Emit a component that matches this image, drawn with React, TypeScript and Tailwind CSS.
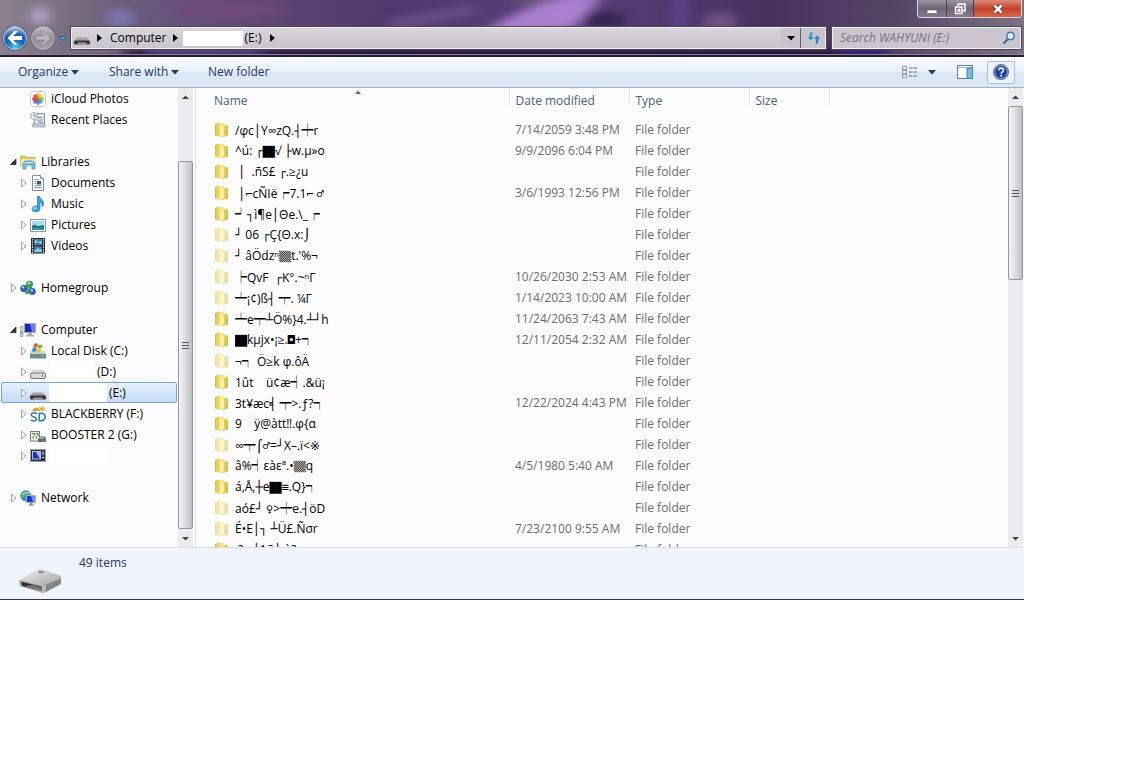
import React from "react";

type IconProps = { className?: string };

const Glass = () => (
  <svg className="absolute inset-0 -z-10 h-full w-full" viewBox="0 0 1024 57" preserveAspectRatio="none" aria-hidden="true">
    <defs>
      <linearGradient id="glass" x1="0" x2="1" y1="0" y2="0">
        <stop offset="0" stopColor="#89808f" />
        <stop offset="0.08" stopColor="#746a7e" />
        <stop offset="0.13" stopColor="#6a5a7c" />
        <stop offset="0.3" stopColor="#5a4170" />
        <stop offset="0.38" stopColor="#4f386b" />
        <stop offset="0.55" stopColor="#59407c" />
        <stop offset="0.75" stopColor="#47315c" />
        <stop offset="0.88" stopColor="#594668" />
        <stop offset="1" stopColor="#7c7186" />
      </linearGradient>
      <filter id="soft" filterUnits="userSpaceOnUse" x="-40" y="-40" width="1104" height="140"><feGaussianBlur stdDeviation="6 4" /></filter>
    </defs>
    <rect width="1024" height="57" fill="url(#glass)" />
    <g filter="url(#soft)">
      <path d="M485 30L520 12 565 -5 605 -5 570 30 490 34Z" fill="#aa80cf" />
      <ellipse cx="40" cy="16" rx="11" ry="9" fill="#b39cc4" />
      <ellipse cx="120" cy="18" rx="15" ry="9" fill="#7a74b0" />
      <ellipse cx="230" cy="10" rx="60" ry="7" fill="#704a79" />
      <path d="M380 22L470 6 480 12 400 28Z" fill="#70538c" />
      <ellipse cx="530" cy="-2" rx="20" ry="7" fill="#65546c" />
      <ellipse cx="605" cy="20" rx="22" ry="8" fill="#35214f" />
      <ellipse cx="680" cy="12" rx="8" ry="20" fill="#5f4590" />
      <ellipse cx="720" cy="22" rx="18" ry="10" fill="#705283" />
      <ellipse cx="880" cy="12" rx="24" ry="12" fill="#534363" />
      <rect x="125" y="50" width="760" height="12" fill="#1e0f34" />
      <ellipse cx="205" cy="53" rx="60" ry="5" fill="#48407f" />
      <ellipse cx="865" cy="53" rx="28" ry="6" fill="#2c2870" />
    </g>
    <rect y="54" width="1024" height="1" fill="#8b8195" />
    <rect y="55" width="1024" height="2" fill="#2a1839" />
  </svg>
);

const BackIcon = () => (
  <svg viewBox="0 0 26 26" className="size-[26px]" aria-hidden="true">
    <defs>
      <radialGradient id="back" cx="0.5" cy="0.95" r="0.9">
        <stop offset="0" stopColor="#4fd2f8" />
        <stop offset="0.45" stopColor="#1b63b8" />
        <stop offset="0.7" stopColor="#2a5ca8" />
        <stop offset="1" stopColor="#a9c6e6" />
      </radialGradient>
    </defs>
    <circle cx="13" cy="13" r="12.500" fill="#33395c" />
    <circle cx="13" cy="13" r="11.500" fill="url(#back)" stroke="#c5d4e8" />
    <path d="M12.500 6L5.500 13l7 7h3.500l-5-5H20v-4h-9l5-5z" fill="#fff" />
  </svg>
);

const ForwardIcon = () => (
  <svg viewBox="0 0 26 26" className="size-[26px]" aria-hidden="true">
    <defs>
      <linearGradient id="fwd" x1="0" x2="0" y1="0" y2="1">
        <stop offset="0" stopColor="#c5c1c9" />
        <stop offset="0.5" stopColor="#918b96" />
        <stop offset="1" stopColor="#aaa4b0" />
      </linearGradient>
    </defs>
    <circle cx="13" cy="13" r="12.500" fill="#62596c" />
    <circle cx="13" cy="13" r="11.500" fill="url(#fwd)" stroke="#b5afba" />
    <path d="M13.500 6l7 7-7 7H10l5-5H6v-4h9l-5-5z" fill="#bdb9c1" stroke="#88838e" strokeWidth="0.700" />
  </svg>
);

const Caret = ({ className = "" }: IconProps) => (
  <svg viewBox="0 0 8 5" className={`h-[5px] w-2 shrink-0 ${className}`} aria-hidden="true"><path d="M0 0h8L4 4.500z" fill="currentColor" /></svg>
);

const Crumb = () => (
  <svg viewBox="0 0 5 8" className="h-2 w-[5px] shrink-0" aria-hidden="true"><path d="M0 0l5 4-5 4z" fill="#000" /></svg>
);

const icon = "size-4 shrink-0";

const DarkDrive = () => (
  <svg viewBox="0 0 16 16" className={icon} aria-hidden="true">
    <path d="M3 7.500h10l3 3.500H0z" fill="#a5a2a8" />
    <path d="M1 10.500h14q1 0 1 1.500v1.500q0 1-1 1H1q-1 0-1-1V12q0-1.500 1-1.500z" fill="#39363b" />
    <path d="M4 12.500h8l1.500 2.500h-11z" fill="#9b989d" />
  </svg>
);

const LightDrive = () => (
  <svg viewBox="0 0 16 16" className={icon} aria-hidden="true">
    <path d="M3 6.500h10l2.500 4H.5z" fill="#e4e4e4" stroke="#aaa" strokeWidth="0.600" />
    <rect x="0.500" y="9" width="15" height="5.500" rx="1.500" fill="#d9dada" stroke="#777" />
    <path d="M12.500 10.500v2.500" stroke="#49a949" />
  </svg>
);

const PhotosIcon = () => (
  <svg viewBox="0 0 16 16" className={icon} aria-hidden="true">
    <rect x="0.500" y="0.500" width="15" height="15" rx="3" fill="#fff" stroke="#d3c6b9" />
    {["#f6a21c", "#e9d22a", "#8cc63f", "#3fae8f", "#4b87d8", "#8d5bb5", "#d83b62", "#ee4b2b"].map((c, i) => (
      <ellipse key={c} cx="8" cy="4.900" rx="1.900" ry="2.900" fill={c} fillOpacity="0.900" transform={`rotate(${i * 45} 8 8)`} />
    ))}
  </svg>
);

const RecentIcon = () => (
  <svg viewBox="0 0 16 16" className={icon} aria-hidden="true">
    <path d="M4.500 1.500h10v11h-10z" fill="#dce8f0" stroke="#8195a5" />
    <path d="M6 5.500h6M7 8h2v3M10 8h3M10 10.500h3" stroke="#7790a2" fill="none" />
    <path d="M2 12h13v3H3z" fill="#c5d2dc" stroke="#8495a3" strokeWidth="0.700" />
    <circle cx="4" cy="4" r="3.500" fill="#eef2f5" stroke="#9aa8b3" />
    <path d="M4 2v2h2" stroke="#687b8c" fill="none" />
  </svg>
);

const LibrariesIcon = () => (
  <svg viewBox="0 0 16 16" className={icon} aria-hidden="true">
    <path d="M.5 2h5l1 1.500H15v9H.5z" fill="#e6c964" stroke="#caa84a" strokeWidth="0.700" />
    <path d="M1 5h14v8H1z" fill="#f7e9a4" />
    <path d="M3 15V9.500L5 7h7.500L15 9.500V15h-3v-4H6v4z" fill="#74c0e8" stroke="#3f8ec2" strokeWidth="0.700" />
    <path d="M5 8.500h8" stroke="#c9ecfb" />
  </svg>
);

const DocumentIcon = () => (
  <svg viewBox="0 0 16 16" className={icon} aria-hidden="true">
    <path d="M2.500.5h8l3 3v12h-11z" fill="#fdfeff" stroke="#7f8fa0" />
    <path d="M10.500.5v3h3" fill="#dfe8f0" stroke="#7f8fa0" />
    <path d="M4.500 4.500h4M4.500 6.500h2M4.500 8.500h2M4.500 10.500h7M4.500 12.500h7" stroke="#8296ac" />
    <rect x="7" y="6" width="4" height="3.500" fill="#2c5f94" />
  </svg>
);

const MusicIcon = () => (
  <svg viewBox="0 0 16 16" className={icon} aria-hidden="true">
    <path d="M7.500.3h2C10 3 14 4 13.500 8.500c-.3 1-.8 1.800-1.300 2.200.3-3-1.200-4-2.200-4.500V13c0 3.500-8 3.500-8 .3 0-2.800 3.300-3.800 5.500-3z" fill="#38a6df" stroke="#1c6fae" strokeWidth="0.700" />
    <ellipse cx="4.800" cy="12.300" rx="2" ry="1.200" fill="#8ad4f5" />
  </svg>
);

const PicturesIcon = () => (
  <svg viewBox="0 0 16 16" className={icon} aria-hidden="true">
    <rect x="0.500" y="2.500" width="15" height="12" fill="#fff" stroke="#8b98a5" />
    <rect x="2" y="4" width="12" height="9" fill="#a5dcf0" />
    <path d="M2 9c3-3 5 0 7 0s3-1 5-1v5H2z" fill="#23776c" />
    <path d="M2 11c4-1 8 1 12 0v2H2z" fill="#2c98b7" />
  </svg>
);

const VideosIcon = () => (
  <svg viewBox="0 0 16 16" className={icon} aria-hidden="true">
    <path d="M1 0h14v15.500H1z" fill="#222b33" />
    <path d="M4 1h8v6H4zM4 8.500h8v6H4z" fill="#3884b6" />
    <path d="M5 2l4 2 3-1.500V6L8 4.500 5 6zM4 13l4-3 4 2v2H4z" fill="#94c7de" />
    <path d="M7 4l2 4-3 1z" fill="#8c3d31" />
    <path d="M2.500 1v14M13.500 1v14" stroke="#e7eef2" strokeDasharray="1.500 1" />
  </svg>
);

const HomegroupIcon = () => (
  <svg viewBox="0 0 16 16" className={icon} aria-hidden="true">
    <path d="M4 8l6-4 2 8-8-4" stroke="#4f8f98" strokeWidth="2.500" fill="#7db8c2" />
    <circle cx="3.800" cy="8.500" r="3.600" fill="#2f5fb8" />
    <circle cx="9.500" cy="4.300" r="3.500" fill="#3f9a55" />
    <circle cx="12.300" cy="11.500" r="3.500" fill="#2f66c4" />
    <circle cx="7" cy="12" r="2.200" fill="#4d9f57" />
    <circle cx="9" cy="3.200" r="1.300" fill="#bce6a5" />
    <circle cx="3" cy="7.200" r="1.200" fill="#acd4f4" />
    <circle cx="11.800" cy="10.300" r="1.200" fill="#a9d2f8" />
  </svg>
);

const ComputerIcon = () => (
  <svg viewBox="0 0 16 16" className={icon} aria-hidden="true">
    <rect x="0.500" y="4.500" width="2.500" height="10" fill="#d8e1d1" stroke="#8b9b8c" strokeWidth="0.700" />
    <path d="M1.800 9v3" stroke="#54a33d" />
    <rect x="4.500" y="1.500" width="11" height="9" fill="#172bb2" stroke="#a2acba" />
    <path d="M10 2h5v8h-3z" fill="#6a82ef" />
    <path d="M8 11h4v2h2v1.500H6V13h2z" fill="#a5adb9" />
  </svg>
);

const LocalDiskIcon = () => (
  <svg viewBox="0 0 16 16" className={icon} aria-hidden="true">
    <path d="M2 8h12l2 3v4.500H0V11z" fill="#718d93" />
    <path d="M2 8h12l1.500 3H.5z" fill="#c6d7dc" />
    <path d="M4 1c2-1 3-1 4 0L7 4.500c-1-.8-2-.8-4 0z" fill="#e25b24" />
    <path d="M8.500 1.300c1.500.8 2.500.8 4 0l-1 3.500c-1.500.8-2.500.8-4 0z" fill="#74b52f" />
    <path d="M2.800 5.200c2-.8 3-.8 4 0l-1 3.600c-1-.8-2-.8-4 0z" fill="#2e83cd" />
    <path d="M7.300 5.600c1.500.8 2.500.8 4 0l-1 3.600c-1.500.8-2.500.8-4 0z" fill="#f4c21d" />
    <path d="M12.500 12v2" stroke="#8ce06d" />
  </svg>
);

const SdIcon = () => (
  <svg viewBox="0 0 16 16" className={icon} aria-hidden="true">
    <path d="M2 5c1-3 4-4 6-3l2 3z" fill="#c9a53b" />
    <path d="M12 0v6M9 1l5 4M14.500 1L9 5M8.500 3h7" stroke="#dda42c" />
    <path d="M7 7.500C4 6 1 7 1.200 9c.2 2 5.300 1.500 5.300 4 0 2-3.500 2.500-5.800 1.200M9.200 7.200v7.600c4 .2 6-1 6-4s-2-3.800-6-3.600z" stroke="#287bac" strokeWidth="1.500" fill="none" />
  </svg>
);

const BoosterIcon = () => (
  <svg viewBox="0 0 16 16" className={icon} aria-hidden="true">
    <rect x="0.500" y="4.500" width="9" height="9.500" fill="#f0f4e7" stroke="#718273" />
    <path d="M2 6.500h2.500v2L3 10v1.500M6 6.500h2v2L6.500 10v1.500" stroke="#49724f" fill="none" />
    <path d="M8 12l2-2.500h5l1 2V15H8z" fill="#66696c" />
    <path d="M9 11h5" stroke="#ddd" />
    <path d="M13.500 13v1.500" stroke="#75c957" />
  </svg>
);

const DeviceIcon = () => (
  <svg viewBox="0 0 16 16" className={icon} aria-hidden="true">
    <rect x="0.500" y="1.500" width="15" height="12" fill="#2b3140" stroke="#9aa1ac" />
    <rect x="2.500" y="3.500" width="8" height="7.500" fill="#1b36b8" stroke="#dfe5f2" strokeWidth="0.800" />
    <path d="M6 4h4v6.500L8 8z" fill="#9db8f8" />
    <path d="M13 3.500v3.500M12 9.500h2" stroke="#e8eaf0" />
  </svg>
);

const NetworkIcon = () => (
  <svg viewBox="0 0 16 16" className={icon} aria-hidden="true">
    <circle cx="5.800" cy="5.800" r="5.500" fill="#3793c7" />
    <path d="M3 2c3-2 5 0 4 2S3 6 4 8s-2 2-3-1 0-4 2-5z" fill="#52b067" />
    <path d="M2 4.500Q5 2 10 3" stroke="#d1f0ee" fill="none" />
    <rect x="6.500" y="5.500" width="9" height="7" fill="#1936bd" stroke="#a9b5c4" />
    <path d="M11 6h4v6h-2z" fill="#728df0" />
    <path d="M10 13h2.500v1.500H14v1H8.500v-1H10z" fill="#7f8a9b" />
  </svg>
);

const FolderIcon = ({ faded }: { faded: boolean }) => (
  <svg viewBox="0 0 16 16" className={`size-4 shrink-0 ${faded ? "opacity-50" : ""}`} aria-hidden="true">
    <path d="M1 2l3.500-1.500 1.500.5v14L1 13.500z" fill="#e8cf57" />
    <path d="M5 1.500L8 .5l2 1V14l-5 1z" fill="#f6e68c" />
    <path d="M8 4l4.500-1.500L14 4v10l-6 1z" fill="#e6cc55" />
    <path d="M6.500 5L10 3.500V13l-3.500 2z" fill="#fbf0ab" />
    <path d="M1.500 2v11.500M13.500 4v10" stroke="#cfb347" strokeWidth="0.700" />
    <path d="M12.500 9v4" stroke="#b3bba4" />
  </svg>
);

const BigDrive = () => (
  <svg viewBox="0 0 46 26" className="h-[26px] w-[46px]" aria-hidden="true">
    <defs>
      <linearGradient id="drive" x1="0" x2="1" y1="0" y2="1"><stop stopColor="#f1f1f1" /><stop offset="1" stopColor="#a3a3a3" /></linearGradient>
    </defs>
    <path d="M2 13L20 2q3-1 6 0l17 6q2 1 1 3v5L29 24q-3 1-6 0L3 18z" fill="#858585" />
    <path d="M2 12L20 2q3-1 6 0l17 6q2 1 0 3L28 17q-3 1-6 0z" fill="url(#drive)" />
    <path d="M2 12l20 5q4 1 7 0v7q-3 1-6 0L4 18.500q-3-1-2-6.500z" fill="#b9b9b9" />
    <path d="M4 13.500l18 4.500 3 1v4L5 18z" fill="#303030" />
    <path d="M7 18l9-1 9 3v3z" fill="#777" />
    <ellipse cx="24" cy="4" rx="3" ry="1.200" fill="#8a8a8a" />
  </svg>
);

type Item = { label: string; Icon: () => React.JSX.Element; root?: boolean; open?: boolean; leaf?: boolean; hidden?: string; selected?: boolean };

const groups: Item[][] = [
  [
    { label: "iCloud Photos", Icon: PhotosIcon, leaf: true },
    { label: "Recent Places", Icon: RecentIcon, leaf: true },
  ],
  [
    { label: "Libraries", Icon: LibrariesIcon, root: true, open: true },
    { label: "Documents", Icon: DocumentIcon },
    { label: "Music", Icon: MusicIcon },
    { label: "Pictures", Icon: PicturesIcon },
    { label: "Videos", Icon: VideosIcon },
  ],
  [{ label: "Homegroup", Icon: HomegroupIcon, root: true }],
  [
    { label: "Computer", Icon: ComputerIcon, root: true, open: true },
    { label: "Local Disk (C:)", Icon: LocalDiskIcon },
    { label: "(D:)", Icon: LightDrive, hidden: "w-[46px]" },
    { label: "(E:)", Icon: DarkDrive, hidden: "w-[58px]", selected: true },
    { label: "BLACKBERRY (F:)", Icon: SdIcon },
    { label: "BOOSTER 2 (G:)", Icon: BoosterIcon },
    { label: "", Icon: DeviceIcon, hidden: "w-[58px]" },
  ],
  [{ label: "Network", Icon: NetworkIcon, root: true }],
];

const files: [string, string, boolean?][] = [
  ["/φc│Y∞zQ.┤┿r", "7/14/2059 3:48 PM"],
  ["^ú: ┌██√ ├w.µ»o", "9/9/2096 6:04 PM"],
  [" │  .ñS£ ┌.≥¿u", ""],
  [" │⌐cÑIë┍7.1⌐ ♂", "3/6/1993 12:56 PM"],
  ["┙┐ì¶e│Θe.\\_┍", ""],
  ["┘ 06 ┌Ç{Θ.x:⌡", "", true],
  ["┘ âÖdzⁿ▒▒t.'%¬", "", true],
  ["┝QvF  ┌K°.~ⁿΓ", "10/26/2030 2:53 AM", true],
  ["┷¡¢)ß┤ ┯. ¼Γ", "1/14/2023 10:00 AM", true],
  ["┷e┯┴Ö%}4.┴┘h", "11/24/2063 7:43 AM"],
  ["██kµjx•¡≥.◘+┑", "12/11/2054 2:32 AM"],
  ["¬┑ Ö≥k φ.ôÄ", "", true],
  ["1ût    ü¢æ┥.&ü¡", ""],
  ["3t¥æc╡ ┯>.ƒ?┑", "12/22/2024 4:43 PM"],
  ["9    ÿ@àtt‼.φ{α", ""],
  ["∞┯⌠♂=┘X–.ï<※", "", true],
  ["â%┥εàεª.•▒▒q", "4/5/1980 5:40 AM"],
  ["á,Å,┼e██≡.Q}┑", ""],
  ["aó£┘ ♀>┿e.┤öD", "", true],
  ["É•E│┐ ┴Ü£.Ñσr", "7/23/2100 9:55 AM", true],
  [" ?   ┤1ñ┤.à?", ""],
];

/* Half-heavy box characters take a full-width cell, shades and blocks a small one. */
const FileName = ({ name }: { name: string }) => (
  <span className="overflow-hidden leading-[21px] whitespace-pre">
    {name.split(/([┍┑┙┝┥┯┷┿]|[█▒]+)/).map((part, i) => {
      if (i % 2 === 0) return part;
      return /[█▒]/.test(part)
        ? <span key={i} className="text-[10px]">{part}</span>
        : <span key={i} className="font-['Noto_Sans_CJK_JP',sans-serif]">{part}</span>;
    })}
  </span>
);

const Expander = ({ open }: { open?: boolean }) => (
  <svg viewBox="0 0 8 10" className="h-[10px] w-2 shrink-0" aria-hidden="true">
    {open ? <path d="M7 2v5.500H1.500z" fill="#333" stroke="#222" strokeWidth="0.700" /> : <path d="M2.500 1l4.500 4-4.500 4z" fill="#fff" stroke="#a3a3a3" />}
  </svg>
);

const ScrollArrow = ({ down }: { down?: boolean }) => (
  <svg viewBox="0 0 15 18" className="h-[18px] w-full shrink-0" aria-hidden="true">
    <path d={down ? "M4 8h7L7.500 11.500z" : "M4 11h7L7.500 7.500z"} fill="#444" />
  </svg>
);

const Thumb = ({ className }: { className: string }) => (
  <div className={`flex items-center justify-center rounded-xs border border-[#96969a] bg-linear-to-r from-[#f5f5f5] via-[#dcdcdf] to-[#bfbfc4] ${className}`}>
    <svg viewBox="0 0 8 8" className="size-2" aria-hidden="true"><path d="M0 1.500h7M0 4.500h7M0 7.500h7" stroke="#58585c" /></svg>
  </div>
);

function TitleBar() {
  return (
    <header className="relative isolate flex h-[57px] flex-col">
      <Glass />
      <div className="mr-[2px] flex h-[18px] self-end overflow-hidden rounded-b border-x border-b border-[#ddd5e2]">
        <button aria-label="Minimize" className="flex w-[29px] items-center justify-center border-r border-[#49404f] bg-linear-to-b from-[#9c94a2] via-[#6e6575] to-[#847b8b]">
          <svg viewBox="0 0 12 12" className="size-3"><rect x="1" y="7" width="10" height="3.500" fill="#fff" stroke="#555" strokeWidth="0.600" /></svg>
        </button>
        <button aria-label="Restore" className="flex w-[27px] items-center justify-center border-r border-[#49404f] bg-linear-to-b from-[#9c94a2] via-[#6e6575] to-[#847b8b]">
          <svg viewBox="0 0 12 12" className="size-3"><path d="M4 3V1h7v7H9M1.500 4h6.500v6.500H1.500zM4.200 6.500h1.500v1.500H4.200z" fill="none" stroke="#fff" strokeWidth="1.500" /></svg>
        </button>
        <button aria-label="Close" className="flex w-[47px] items-center justify-center bg-linear-to-b from-[#dd8b7a] via-[#c2402c] to-[#d76748]">
          <svg viewBox="0 0 12 12" className="size-3"><path d="M2.500 2.500l7 7M9.500 2.500l-7 7" stroke="#5f2b26" strokeWidth="4" /><path d="M2.500 2.500l7 7M9.500 2.500l-7 7" stroke="#fff" strokeWidth="2.500" /></svg>
        </button>
      </div>
      <div className="mt-[7px] flex h-[26px] items-center px-[2px]">
        <button aria-label="Back"><BackIcon /></button>
        <button aria-label="Forward" className="ml-[2px]"><ForwardIcon /></button>
        <button aria-label="Recent pages" className="ml-[3px] flex w-2 text-[#3d9bc9]">
          <svg viewBox="0 0 8 5" className="h-[5px] w-2" aria-hidden="true"><path d="M.5.5h7L4 4.500z" fill="#4fb0de" stroke="#1d4a72" strokeWidth="0.800" /></svg>
        </button>
        <div className="ml-[3px] flex h-6 flex-1 border border-[#4d4455] bg-[#c8c4cc] outline-1 -outline-offset-2 outline-[#f4f1f6]">
          <div className="flex flex-1 items-center bg-linear-to-b from-white/30 to-transparent pl-[3px]">
            <DarkDrive />
            <span className="ml-[7px] flex"><Crumb /></span>
            <a href="#computer" className="ml-2">Computer</a>
            <span className="ml-[6px] flex"><Crumb /></span>
            <span className="ml-[5px] h-[15px] w-[60px] bg-white" />
            <a href="#e" className="ml-[2px]">(E:)</a>
            <span className="ml-[9px] flex"><Crumb /></span>
          </div>
          <button aria-label="Previous locations" className="flex w-[19px] items-center justify-center"><Caret /></button>
          <button aria-label="Refresh" className="flex w-[26px] items-center justify-center border-l border-[#65606c]">
            <svg viewBox="0 0 16 16" className="size-4">
              <path d="M7.500 1C4 1.500 3 3.500 3.300 6.500H.8l4 4.500 4-4.500H6.300C6.200 4.500 6.300 3 7.500 1z" fill="#3b8fcb" stroke="#eaf3f9" strokeWidth="0.500" />
              <path d="M8.500 15c3.500-.5 4.500-2.500 4.200-5.500h2.500l-4-4.500-4 4.500h2.500c.1 2 0 3.500-1.200 5.500z" fill="#2f7fc0" stroke="#eaf3f9" strokeWidth="0.500" />
            </svg>
          </button>
        </div>
        <label className="ml-1 flex h-6 w-[191px] items-center border border-[#4d4455] bg-[#cbc6ce] pr-[5px] pl-2 outline-1 -outline-offset-2 outline-[#f4f1f6]">
          <input type="search" aria-label="Search WAHYUNI (E:)" placeholder="Search WAHYUNI (E:)" className="min-w-0 flex-1 bg-transparent italic outline-none placeholder:text-[#77717c]" />
          <svg viewBox="0 0 14 14" className="size-[14px]" aria-hidden="true">
            <path d="M1.500 12.500L6 8" stroke="#346d9f" strokeWidth="2.200" />
            <circle cx="8.500" cy="5" r="3.700" fill="#dce8f2" stroke="#3a78ad" strokeWidth="1.500" />
          </svg>
        </label>
      </div>
    </header>
  );
}

function Toolbar() {
  return (
    <div className="flex h-[31px] shrink-0 items-center border-b border-[#a2b0c3] bg-[linear-gradient(#fbfdff,#e8f1fc_50%,#dce7f5_50%,#dce8f6)] pr-[9px] pl-[18px] text-[#1e395b]">
      <button className="flex w-[91px] items-center gap-[3px]">Organize<Caret /></button>
      <button className="flex w-[99px] items-center gap-[3px]">Share with<Caret /></button>
      <button>New folder</button>
      <button aria-label="Change your view" className="ml-auto flex w-[34px] items-center gap-[10px]">
        <svg viewBox="0 0 16 14" className="h-[14px] w-4 shrink-0">
          <path d="M.5 1.500h4v3h-4zM.5 5.500h4v3h-4zM.5 9.500h4v3h-4z" fill="#f7fbff" stroke="#7c8a98" strokeWidth="0.800" />
          <path d="M7 3h8M7 7h8M7 11h8" stroke="#546b86" strokeDasharray="3.500 1" />
        </svg>
        <Caret />
      </button>
      <button aria-label="Show the preview pane" className="ml-[21px]">
        <svg viewBox="0 0 16 14" className="h-[14px] w-4">
          <path d="M.5.5h15v13H.5z" fill="#fff" stroke="#637d95" />
          <path d="M1 2.500h14" stroke="#a5b7c6" /><path d="M10 3h5.500v10.500H10z" fill="#71bfd8" stroke="#3b8bab" />
        </svg>
      </button>
      <button aria-label="Get help" className="ml-[14px] flex h-[23px] w-7 items-center justify-center rounded-xs border border-[#afc0d8] bg-[#ecf3fc]">
        <svg viewBox="0 0 16 16" className="size-4">
          <circle cx="8" cy="8" r="7.500" fill="#8fa3cc" stroke="#536485" /><circle cx="8" cy="8" r="6" fill="#1e43a0" />
          <path d="M5.700 6.300c.2-3 5-2.800 4.800 0-.2 1.700-2.300 1.500-2.300 3.500" stroke="#fff" strokeWidth="1.600" fill="none" /><circle cx="8.200" cy="11.800" r="1" fill="#fff" />
        </svg>
      </button>
    </div>
  );
}

function Sidebar() {
  return (
    <aside className="flex w-[196px] shrink-0 border-r border-[#d9e3f0]">
      <nav className="flex min-w-0 flex-1 flex-col gap-[21px]">
        {groups.map((g, i) => (
          <ul key={i}>
            {g.map((it, j) => (
              <li key={j} className="px-px">
                <a
                  href="#folder"
                  aria-label={it.label || "Device"}
                  className={`flex h-[21px] items-center rounded-xs border ${it.root ? "pl-[7px]" : "pl-[17px]"} ${it.selected ? "border-[#7da2ce] bg-linear-to-b from-[#e8f1fc] to-[#c4dbf8]" : "border-transparent"}`}
                >
                  {it.leaf ? <span className="w-2" /> : <Expander open={it.open} />}
                  <span className="ml-[3px] flex"><it.Icon /></span>
                  {it.hidden && <span className={`ml-[3px] h-[19px] bg-white ${it.hidden}`} />}
                  <span className={it.hidden ? "ml-[2px]" : "ml-[5px]"}>{it.label}</span>
                </a>
              </li>
            ))}
          </ul>
        ))}
      </nav>
      <div className="mr-[2px] flex w-[15px] flex-col bg-[#ececee]">
        <ScrollArrow />
        <div className="h-[55px]" />
        <Thumb className="flex-1" />
        <ScrollArrow down />
      </div>
    </aside>
  );
}

function FileList() {
  const th = "h-[17px] border-r border-[#dfe5ec] p-0 text-left font-normal";
  return (
    <main className="flex min-w-0 flex-1">
      <div className="flex-1 overflow-hidden">
        <table className="w-[633px] table-fixed border-collapse">
          <colgroup>
            <col className="w-[313px]" /><col className="w-[120px]" /><col className="w-[120px]" /><col className="w-[80px]" />
          </colgroup>
          <thead className="text-[#4c607a]">
            <tr className="align-top">
              <th className={`${th} relative`}>
                <svg viewBox="0 0 8 4" className="absolute top-[2px] left-[158px] h-1 w-2" aria-hidden="true"><path d="M1 4l3-3.500L7 4z" fill="#4d7596" /></svg>
                <span className="block h-[17px] pt-1 pl-[18px] leading-[18px]">Name</span>
              </th>
              <th className={th}><span className="block h-[17px] pt-1 pl-[6px] leading-[18px]">Date modified</span></th>
              <th className={th}><span className="block h-[17px] pt-1 pl-[6px] leading-[18px]">Type</span></th>
              <th className={th}><span className="block h-[17px] pt-1 pl-[6px] leading-[18px]">Size</span></th>
            </tr>
            <tr className="h-[14px]"><td colSpan={4} /></tr>
          </thead>
          <tbody className="text-[#6d6d6d]">
            {files.map(([name, date, faded], i) => (
              <tr key={i} className="h-[21px]">
                <td className="p-0">
                  <span className="flex h-[21px] items-center gap-[5px] pl-[18px] text-black">
                    <FolderIcon faded={!!faded} />
                    <FileName name={name} />
                  </span>
                </td>
                <td className="p-0 pl-[6px] whitespace-nowrap">{date}</td>
                <td className="p-0 pl-[6px]">File folder</td>
                <td className="p-0" />
              </tr>
            ))}
          </tbody>
        </table>
      </div>
      <div className="mr-px flex w-[15px] flex-col bg-[#ececee]">
        <ScrollArrow />
        <Thumb className="h-[174px]" />
        <div className="flex-1" />
        <ScrollArrow down />
      </div>
    </main>
  );
}

export default function App() {
  return (
    <div className="h-screen bg-white pr-[118px] pb-[176px] font-['Open_Sans','DejaVu_Sans_Mono','DejaVu_Sans',sans-serif] text-xs text-black">
      <div className="flex h-full flex-col border-b border-[#3b2d4b]">
        <TitleBar />
        <Toolbar />
        <div className="flex min-h-0 flex-1 overflow-hidden bg-[#fcfcfc]">
          <Sidebar />
          <FileList />
        </div>
        <footer className="flex h-[52px] shrink-0 items-start border-t border-[#d5dfec] bg-[#f0f4fc] pl-[17px] text-[#1e395b]">
          <span className="mt-5 flex"><BigDrive /></span>
          <span className="mt-[7px] ml-4">49 items</span>
        </footer>
      </div>
    </div>
  );
}
